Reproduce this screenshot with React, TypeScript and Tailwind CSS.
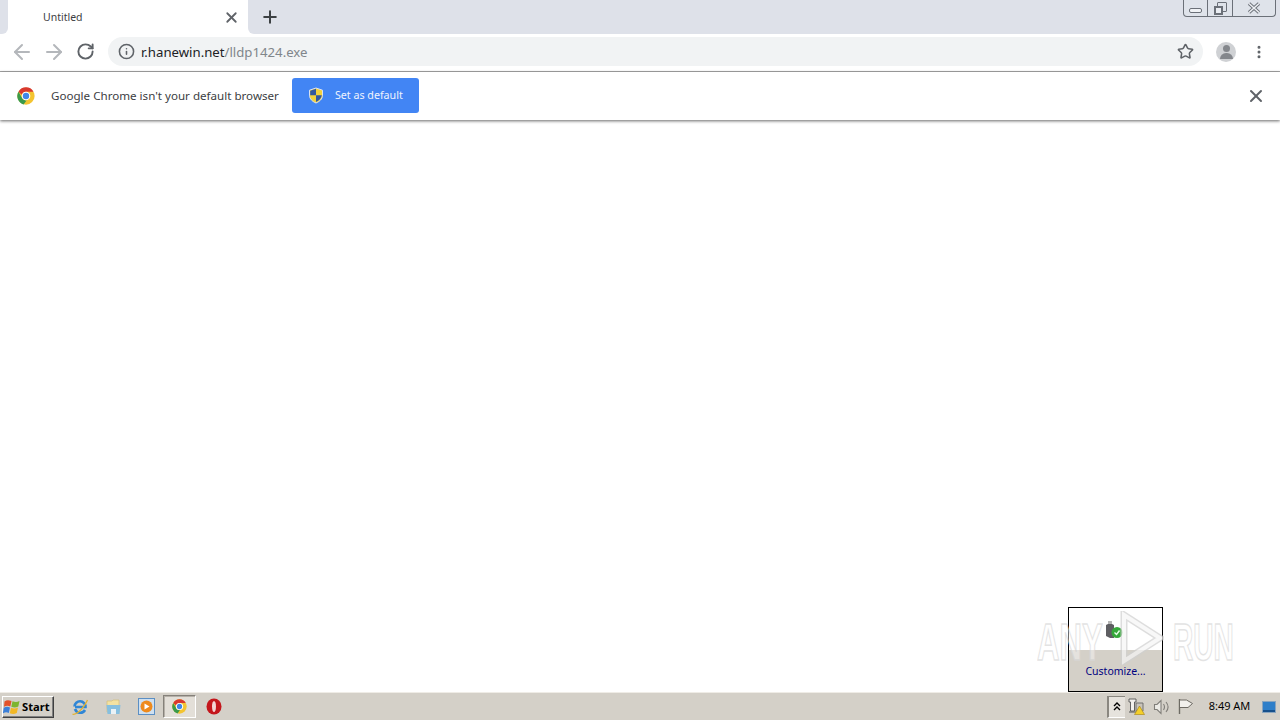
import { ArrowLeft, ArrowRight, RotateCw, Info, Star, MoreVertical, X, Plus } from "lucide-react";

const ui = { fontFamily: '"Noto Sans", Tahoma, sans-serif' };

function ChromeLogo({ size = 18 }: { size?: number }) {
  return (
    <svg width={size} height={size} viewBox="0 0 48 48">
      <circle cx="24" cy="24" r="23" fill="#f4c430" />
      <path d="M24 1a23 23 0 0 1 20 11.500H24a11.500 11.500 0 0 0-11 8L4 12.500A23 23 0 0 1 24 1z" fill="#d8392f" />
      <path d="M4 12.500l10 17.500a11.500 11.500 0 0 0 12 5.500L17.500 46.500A23 23 0 0 1 4 12.500z" fill="#3b9a4a" />
      <circle cx="24" cy="24" r="11.500" fill="#fff" />
      <circle cx="24" cy="24" r="8.500" fill="#3f87e8" />
    </svg>
  );
}

function Shield() {
  return (
    <svg width="16" height="17" viewBox="0 0 16 17">
      <path d="M8 1l6.500 2.200v5c0 3.800-3 6.400-6.500 7.800C4.500 14.600 1.500 12 1.500 8.200v-5z" fill="#f3d23c" stroke="#d9e2f2" />
      <path d="M8 1.800v6.400H2.200v-4.500zM8 8.200h5.800c-.3 3-2.800 5.300-5.800 6.700z" fill="#34589e" />
    </svg>
  );
}

function WinLogo() {
  return (
    <svg width="19" height="18" viewBox="0 0 19 18">
      <path d="M1.500 3.500c2-1.500 4-1.500 7-.5L7.300 8.500C5 7.500 3.500 7.500 1 8.700z" fill="#e2522a" />
      <path d="M9.500 3.200c2.500 1 4.500 1 7-.2L15.300 8.500c-2.500 1.200-4.500 1.200-7 .2z" fill="#7db52f" />
      <path d="M.8 9.700c2.400-1.200 4-1.200 6.200-.2L5.800 15c-2-1-3.500-1-6 .3z" fill="#3b7fd8" />
      <path d="M8 9.800c2.500 1 4.500 1 7-.2L13.800 15c-2.500 1.200-4.500 1.200-7 .2z" fill="#f2b826" />
    </svg>
  );
}

function TaskIcons() {
  return (
    <div className="flex items-center">
      <div className="w-[34px] flex justify-center">
        <svg width="18" height="18" viewBox="0 0 18 18">
          <path d="M3.500 8.500a5.500 5.500 0 0 1 11 0.500H4M14 12a5.500 5.500 0 0 1-10-1" fill="none" stroke="#2f86d6" strokeWidth="2.600" />
          <path d="M1.500 16c2.500 1.500 10-3.500 15-14" fill="none" stroke="#e3b230" strokeWidth="1.400" />
        </svg>
      </div>
      <div className="w-[32px] flex justify-center">
        <svg width="17" height="17" viewBox="0 0 17 17">
          <path d="M2 3h5l1-1h6v12H2z" fill="#f3e2a2" stroke="#d3bd78" strokeWidth=".7" />
          <path d="M1.500 7h14l-1 9h-12z" fill="#86bfdf" />
          <path d="M6 16v-5h5v5z" fill="#eaf2f6" />
        </svg>
      </div>
      <div className="w-[34px] flex justify-center">
        <svg width="17" height="17" viewBox="0 0 17 17">
          <rect x=".5" y=".5" width="16" height="16" fill="#cfe0f0" stroke="#5b8fc4" />
          <circle cx="8.500" cy="8.500" r="6" fill="#ee8a1c" />
          <path d="M6.500 5.500l5 3-5 3z" fill="#fff" />
        </svg>
      </div>
      <div className="w-[33px] h-[23px] flex items-center justify-center bg-[#e3dfd8] border-t border-l border-b border-r border-t-[#85817a] border-l-[#85817a] border-b-white border-r-white shadow-[inset_1px_1px_0_#b5b0a8]">
        <ChromeLogo size={15} />
      </div>
      <div className="ml-[1px] w-[34px] flex justify-center">
        <svg width="16" height="17" viewBox="0 0 16 17">
          <ellipse cx="8" cy="8.500" rx="7.500" ry="8" fill="#c4161c" />
          <ellipse cx="8" cy="8.500" rx="2" ry="5.500" fill="#f3d4d4" />
        </svg>
      </div>
    </div>
  );
}

function Tray() {
  return (
    <div className="flex items-center h-full">
      <div className="w-[18px] h-[22px] border-t border-l-2 border-b border-t-[#8a8780] border-l-[#8a8780] border-b-white bg-[#e6e3dd] flex items-center justify-center">
        <svg width="8" height="9" viewBox="0 0 8 9"><path d="M1 4l3-3 3 3M1 8l3-3 3 3" fill="none" stroke="#000" strokeWidth="1.400" /></svg>
      </div>
      <div className="w-[24px] flex justify-center">
        <svg width="18" height="17" viewBox="0 0 18 17">
          <path d="M1 1h7v3H6.500v9h-4V4H1z" fill="#f2f0ec" stroke="#555" strokeWidth=".9" />
          <path d="M8 5h7v8H8z" fill="#c9c4ba" stroke="#666" strokeWidth=".9" />
          <path d="M1 14h7" stroke="#555" strokeWidth="1" />
          <path d="M11.500 8l5 8.500h-10z" fill="#f4cf2a" stroke="#a27f10" strokeWidth=".6" />
        </svg>
      </div>
      <div className="w-[24px] flex justify-center">
        <svg width="17" height="16" viewBox="0 0 17 16" fill="none" stroke="#807e79" strokeWidth="1.100">
          <path d="M1.500 5.500h2.500l4-4v13l-4-4H1.500z" fill="#ecebe6" />
          <path d="M10.500 5c1.300 2 1.300 4 0 6M13 3c2.500 3 2.500 7 0 10" />
        </svg>
      </div>
      <div className="w-[24px] flex justify-center">
        <svg width="17" height="17" viewBox="0 0 17 17" fill="none" stroke="#6e6b64">
          <path d="M2.500 1v15" strokeWidth="1.400" />
          <path d="M3 2h6.500l6 3.500-4.500 4H3" fill="#f2f0ec" />
        </svg>
      </div>
      <span className="w-[65px] text-center text-[11px] text-black">8:49 AM</span>
      <div className="w-[14px] h-[12px] bg-[#2f7fc9] border border-[#8aa5bf] mr-[4px] flex items-end">
        <div className="w-full h-[2px] bg-[#16508c]" />
      </div>
    </div>
  );
}

export default function App() {
  return (
    <div className="relative w-[1280px] h-[720px] overflow-hidden bg-white flex flex-col" style={ui}>
      {/* tab strip */}
      <div className="h-[34px] bg-white flex relative shrink-0">
        <div className="w-[8px] bg-[#dee1e9] rounded-br-[6px]" />
        <div className="w-[240px] bg-white rounded-t-[8px] flex items-center">
          <span className="ml-[35px] mt-[2px] text-[10.5px] text-[#3c4043]">Untitled</span>
          <X className="ml-auto mr-[8px] text-[#5f6368]" size={17} strokeWidth={2.500} />
        </div>
        <div className="flex-1 bg-[#dee1e9] rounded-bl-[6px] flex items-center">
          <Plus className="ml-[12px] text-[#3c4043]" size={20} strokeWidth={2.400} />
        </div>
        <div className="absolute top-0 right-[4px] h-[17px] flex border border-t-0 border-[#6b7078] rounded-b-[4px] bg-[#dfe3ea]">
          <div className="w-[24px] flex items-center justify-center border-r border-[#6b7078]">
            <div className="w-[13px] h-[5px] mt-[5px] border border-[#6b7078] rounded-[2px] bg-[#f0f2f5]" />
          </div>
          <div className="w-[25px] flex items-center justify-center border-r border-[#6b7078]">
            <div className="relative w-[13px] h-[13px]">
              <div className="absolute right-0 top-0 w-[10px] h-[10px] border border-[#6b7078] rounded-[1px]" />
              <div className="absolute left-0 bottom-0 w-[9px] h-[9px] border-2 border-[#6b7078] bg-[#e9ecf1]" />
            </div>
          </div>
          <div className="w-[42px] flex items-center justify-center">
            <svg width="14" height="12" viewBox="0 0 14 12" fill="none">
              <path d="M2 1.500l10 9M12 1.500l-10 9" stroke="#6b7078" strokeWidth="3.400" />
              <path d="M2 1.500l10 9M12 1.500l-10 9" stroke="#eceef2" strokeWidth="1.600" />
            </svg>
          </div>
        </div>
      </div>

      {/* toolbar */}
      <div className="h-[38px] bg-white border-b border-[#a8a8a8] flex items-center pb-[2px] shrink-0">
        <ArrowLeft className="ml-[10px] text-[#b4b7bb]" size={24} strokeWidth={2} />
        <ArrowRight className="ml-[8px] text-[#b4b7bb]" size={24} strokeWidth={2} />
        <RotateCw className="ml-[10px] text-[#5f6368]" size={19} strokeWidth={2.400} />
        <div className="ml-[13px] w-[1095px] h-[29px] rounded-full bg-[#f1f3f4] flex items-center">
          <Info className="ml-[10px] text-[#5f6368]" size={17} strokeWidth={2.200} />
          <div className="ml-[6px] text-[13.2px] leading-none mt-[3px]">
            <span className="text-[#202124]">r.hanewin.net</span>
            <span className="text-[#80868b]">/lldp1424.exe</span>
          </div>
          <Star className="ml-auto mr-[9px] text-[#5f6368]" size={17} strokeWidth={2.200} />
        </div>
        <div className="ml-[13px] w-[20px] h-[20px] rounded-full bg-[#cfd1d4] flex flex-col items-center justify-center overflow-hidden">
          <div className="w-[7px] h-[7px] rounded-full bg-[#84878c]" />
          <div className="w-[13px] h-[6px] mt-[1px] rounded-t-full bg-[#84878c]" />
        </div>
        <MoreVertical className="ml-[15px] text-[#5f6368]" size={16} strokeWidth={2.500} />
      </div>

      {/* infobar */}
      <div className="h-[48px] bg-white flex items-center pb-[1px] shrink-0 shadow-[0_1px_3px_rgba(0,0,0,0.6)] relative">
        <div className="ml-[17px] flex"><ChromeLogo /></div>
        <span className="ml-[16px] text-[11.6px] text-[#3c4043]">Google Chrome isn't your default browser</span>
        <div className="ml-[13px] w-[127px] h-[35px] bg-[#4285f4] rounded-[3px] flex items-center">
          <div className="ml-[16px] flex"><Shield /></div>
          <span className="ml-[11px] mb-[1px] text-[10.7px] text-[#eef3fe]">Set as default</span>
        </div>
        <X className="ml-auto mr-[14px] text-[#5f6368]" size={20} strokeWidth={2.400} />
      </div>

      {/* page */}
      <div className="flex-1 bg-white" />

      {/* taskbar */}
      <div className="h-[28px] bg-[#d4d0c8] border-t border-[#efece6] shrink-0 flex items-center justify-between">
        <div className="flex items-center">
          <div className="ml-[2px] w-[52px] h-[22px] flex items-center bg-[#d4d0c8] border border-t-white border-l-white border-r-[#404040] border-b-[#404040] shadow-[inset_-1px_-1px_0_#808080]">
            <WinLogo />
            <span className="text-[11.2px] font-bold text-black leading-none">Start</span>
          </div>
          <div className="ml-[9px]"><TaskIcons /></div>
        </div>
        <Tray />
      </div>

      {/* tray popup */}
      <div className="absolute left-[1068px] top-[607px] w-[95px] h-[85px] border border-black bg-white flex flex-col">
        <div className="h-[42px] flex items-center justify-center pt-[1px] pr-[3px]">
          <svg width="18" height="19" viewBox="0 0 18 19">
            <path d="M1 5l2-1V1h4v3l2 1v13H5l-4-2z" fill="#5e5e62" />
            <path d="M3 1h4v3H3z" fill="#b5b5b5" />
            <circle cx="12" cy="12.500" r="5.500" fill="#35a83a" />
            <path d="M9.500 12.500l2 2 3-4" fill="none" stroke="#e8ffe8" strokeWidth="1.400" />
          </svg>
        </div>
        <div className="flex-1 bg-[#d4d0c8] flex justify-center pt-[16px]">
          <span className="text-[10.5px] leading-none text-[#00007f]">Customize...</span>
        </div>
      </div>

      {/* watermark */}
      <div className="absolute left-[1037px] top-[611px] w-[200px] h-[54px] pointer-events-none opacity-70">
        <span className="absolute left-0 top-[4px] origin-left scale-x-[0.6] text-[52px] leading-[54px] font-bold text-white/60" style={{ WebkitTextStroke: "1.500px #d8d8d8", fontFamily: '"Liberation Sans", sans-serif' }}>ANY</span>
        <svg className="absolute left-[83px] top-0" width="44" height="54" viewBox="0 0 44 54" fill="none">
          <path d="M4 4l36 23L4 50z" stroke="#d0d0d0" strokeWidth="7" />
          <path d="M4 4l36 23L4 50z" stroke="#f6f6f6" strokeWidth="4" />
        </svg>
        <span className="absolute left-[136px] top-[4px] origin-left scale-x-[0.54] text-[52px] leading-[54px] font-bold text-white/60" style={{ WebkitTextStroke: "1.500px #d8d8d8", fontFamily: '"Liberation Sans", sans-serif' }}>RUN</span>
      </div>
    </div>
  );
}
